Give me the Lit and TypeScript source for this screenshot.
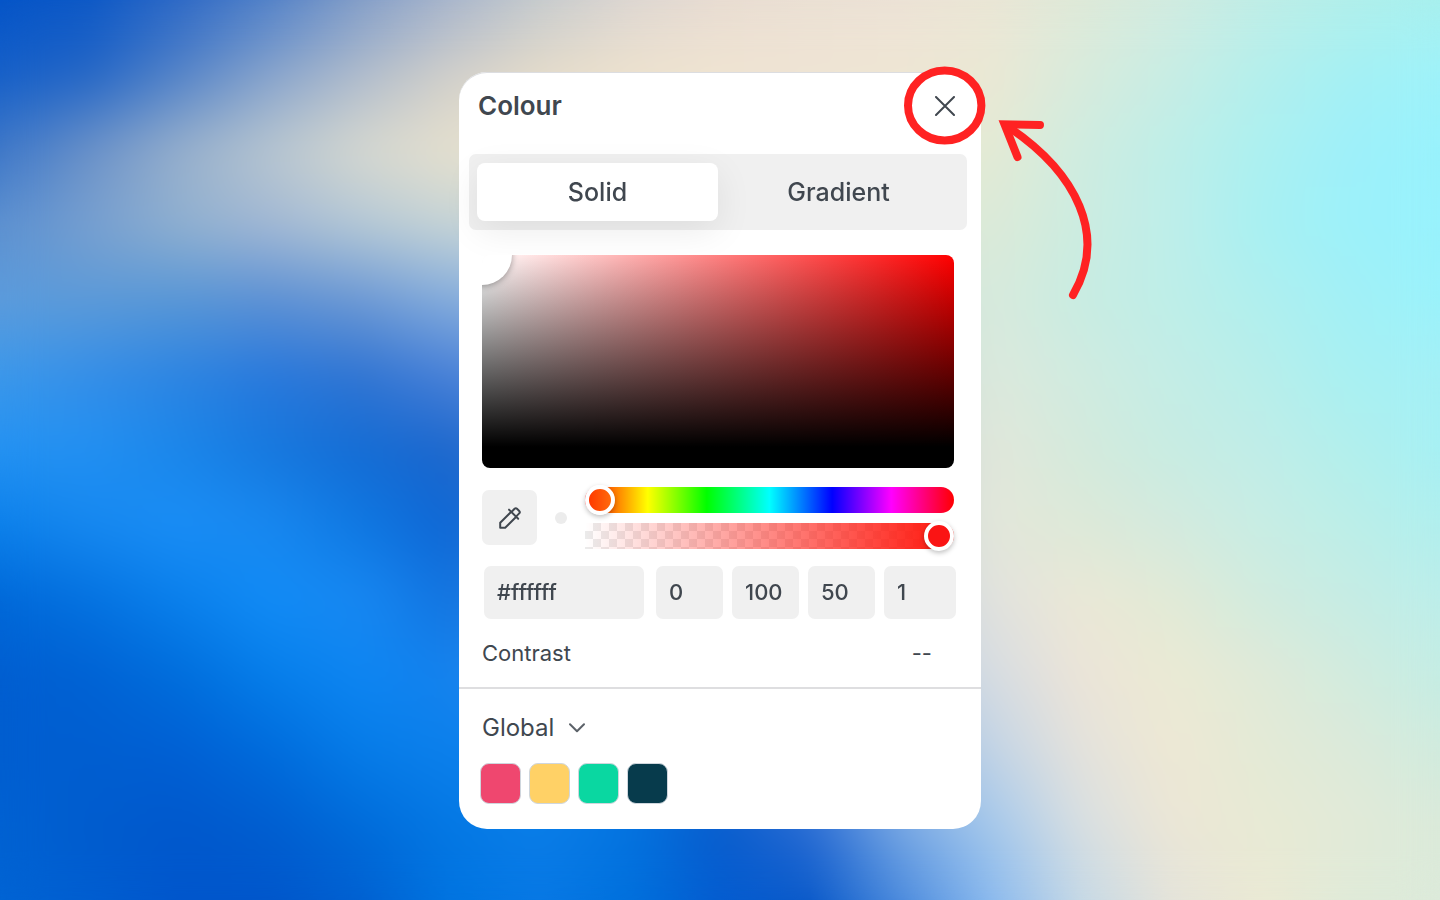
import { LitElement, html, css, svg } from "lit";
import { customElement, state } from "lit/decorators.js";

type Sample = [number, string];

// Colour samples for the wallpaper: one string per row, columns listed in X.
const X_LEFT = [0, 6.25, 12.5, 18.75, 25, 31.25];
const X_MID = [37.5, 43.75, 50, 56.25, 62.5];
const X_RIGHT = [68.75, 75, 81.25, 87.5, 93.75, 100];

const ROWS: { l: string; m?: string; r: string }[] = [
  { l: "0454c8 0c58c6 2c68c6 5080c8 809cc8 a6b4cc", m: "c4cace dcd6d2 e8dcd2 eae0d4 ece2d6", r: "eae6d6 dfe9d8 d2ebe0 c0ede6 b2efea a8f0ee" },
  { l: "1660c8 2466c6 5584c8 88a4cc b0bccc d2d0ca", m: "e6dcca eee2ce f0e4d2 f0e4d4 efe6d4", r: "ebe8d4 d8ebdc c8ede4 b4efec a4f0f4 9ef2fa" },
  { l: "3c76c8 6c92c8 98b0cc b8c6d0 d6d8d0 e6e0ce", r: "e4ead4 cfece0 beeee8 acf0f0 9ef0fa 98f2fc" },
  { l: "5c90d0 78a0d0 90b0d0 a2b8d4 b4c8d6 c6d4d6", r: "dcead8 ccece0 beeeea a8f0f2 9cf1fa 98f2fd" },
  { l: "5c9cdc 5c9ad8 5896d6 5c90d4 6c98d4 84acdc", r: "d8eadc c8ece2 beeee8 b0efee a2f0f6 9af2fb" },
  { l: "3c98ea 348ee8 2c84e2 2878dc 3074d2 4880d8", r: "dce9dc d0ebe0 c4ede6 b8eeea a8f0f2 a4f0f6" },
  { l: "2492f2 2290f2 1a86ea 1678de 146cd4 1c66cc", r: "e2e7da d4eadc c8ece2 c0ede8 b2efec a6f0f4" },
  { l: "0c80ea 1688f0 1a8ef6 1888f0 0f78e2 0e66d4", r: "e4e7da dde9d8 d4eade c8ede4 bceee8 b0efee" },
  { l: "0068d8 0472e0 0a80ec 128cf6 1888f2 1274e0", r: "e2e2de ebe8d6 e2ead6 d2ebde c6ece4 bceeea" },
  { l: "005ed0 0062d4 006edc 067eea 0e86f2 1482ee", r: "d6dce2 ece4d8 ebead4 e0ead8 d2ebde c4ede4" },
  { l: "005ed0 005ed0 0060d4 006cdc 067ce8 0c80ec", m: "0c80ec 0874e4 1468d4 4c88dc 90b4e4", r: "c2d4e6 e4e2dc eee8d4 e4ead6 dceada d0ebde" },
  { l: "0062d2 005cce 0058cc 005ed0 006cda 0478e4", m: "0a7ee8 0474e0 085ccc 2a6cd4 78a8e4", r: "a4c8ec d8dfe2 ece6d6 e8ead4 e2ead8 daeada" },
  { l: "0064d4 005ed0 0056cc 0056ca 0060d0 0074e0", m: "0878e4 0070dc 045cd0 0858c8 4888dc", r: "88b8ee c4d8e6 e4e3da ebe9d4 dfead8 dceada" },
];

function rowGradient(row: { l: string; m?: string; r: string }): string {
  const zip = (xs: number[], s?: string): Sample[] =>
    s ? s.split(" ").map((c, i) => [xs[i], c] as Sample) : [];
  const stops = [...zip(X_LEFT, row.l), ...zip(X_MID, row.m), ...zip(X_RIGHT, row.r)];
  return `linear-gradient(90deg, ${stops.map(([x, c]) => `#${c} ${x}%`).join(", ")})`;
}

@customElement("mesh-wallpaper")
export class MeshWallpaper extends LitElement {
  static styles = css`
    :host {
      position: absolute;
      inset: 0;
      display: flex;
      flex-direction: column;
      overflow: hidden;
    }
    .band {
      flex: 1;
      position: relative;
      background: var(--from);
    }
    .band::after {
      content: "";
      position: absolute;
      inset: 0;
      background: var(--to);
      -webkit-mask-image: linear-gradient(transparent, #000);
      mask-image: linear-gradient(transparent, #000);
    }
    .soften {
      position: absolute;
      inset: 0;
      backdrop-filter: blur(20px);
    }
  `;

  render() {
    const g = ROWS.map(rowGradient);
    return html`
      ${g.slice(0, -1).map((from, i) => html`<div class="band" style="--from:${from};--to:${g[i + 1]}"></div>`)}
      <div class="soften"></div>
    `;
  }
}

const closeIcon = svg`<svg class="close-icon" viewBox="0 0 20 20" aria-hidden="true"><path d="M1 1 19 19M19 1 1 19" /></svg>`;

const pipetteIcon = svg`<svg class="pipette-icon" viewBox="0 0 22 22" aria-hidden="true">
  <path d="M12 5 1.2 15.8V20.8H6.2L17 10" />
  <path d="M10 2.6 19.2 11.8" />
  <path d="M12.4 5 15.6 1.8Q16.8.6 18 1.8L20.2 4Q21.4 5.2 20.2 6.4L17 9.6" />
</svg>`;

const chevronIcon = svg`<svg class="chevron" viewBox="0 0 16 10" aria-hidden="true"><path d="M1 1.2 8 8.2 15 1.2" /></svg>`;

@customElement("app-root")
export class AppRoot extends LitElement {
  static styles = css`
    :host {
      --ink: #40474f;
      --fill: #f0f0f0;
      position: relative;
      display: flex;
      align-items: center;
      justify-content: center;
      min-height: 100vh;
      font-family: Inter, "Liberation Sans", sans-serif;
      color: var(--ink);
      overflow: hidden;
    }
    * {
      box-sizing: border-box;
    }
    button,
    input,
    select {
      font: inherit;
      color: inherit;
      border: 0;
      margin: 0;
      padding: 0;
      background: none;
    }
    svg {
      display: block;
      fill: none;
      stroke: currentColor;
      stroke-linecap: round;
      stroke-linejoin: round;
    }
    .panel {
      position: relative;
      width: 522px;
      border-radius: 28px;
      background: #fff;
      box-shadow: inset 0 1px #dcdde0;
    }
    .head {
      display: flex;
      align-items: center;
      justify-content: space-between;
      height: 68px;
      padding: 0 17px 0 19px;
    }
    h1 {
      margin: 0;
      font-size: 26px;
      font-weight: 600;
      line-height: 32px;
    }
    .close {
      display: grid;
      place-items: center;
      width: 39px;
      height: 39px;
    }
    .close-icon {
      width: 20px;
      height: 20px;
      stroke-width: 2;
    }
    .tabs {
      display: grid;
      grid-template-columns: 1fr 1fr;
      margin: 14px 14px 0 10px;
      padding: 9px 8px;
      border-radius: 7px;
      background: var(--fill);
    }
    .tab {
      height: 58px;
      border-radius: 8px;
      font-size: 25px;
      font-weight: 500;
    }
    .tab.active {
      background: #fff;
      box-shadow: 0 10px 36px rgba(0, 0, 0, 0.08);
    }
    .spectrum {
      position: relative;
      height: 213px;
      margin: 25px 27px 0 23px;
      border-radius: 8px;
      overflow: hidden;
      background: linear-gradient(to top, #000 10%, transparent),
        linear-gradient(to right, #fff, #f00);
    }
    .picker {
      position: absolute;
      left: -30px;
      top: -30px;
      width: 60px;
      height: 60px;
      border-radius: 50%;
      background: #fff;
      box-shadow: 0 1px 6px rgba(0, 0, 0, 0.35);
    }
    .mixer {
      display: flex;
      align-items: center;
      gap: 18px;
      margin: 19px 27px 0 23px;
    }
    .dropper {
      display: grid;
      place-items: center;
      width: 55px;
      height: 55px;
      border-radius: 7px;
      background: var(--fill);
    }
    .pipette-icon {
      width: 22px;
      height: 22px;
      stroke-width: 2;
    }
    .dot {
      width: 12px;
      height: 12px;
      border-radius: 50%;
      background: #ececec;
    }
    .sliders {
      flex: 1;
      display: flex;
      flex-direction: column;
      gap: 10px;
    }
    .slider {
      -webkit-appearance: none;
      appearance: none;
      display: block;
      width: 100%;
      height: 26px;
      border-radius: 13px;
    }
    .hue {
      background: linear-gradient(to right, #f00, #ff0 17%, #0f0 33%, #0ff 50%, #00f 67%, #f0f 83%, #f00);
      --thumb: linear-gradient(to right, #ff3a00, #ff6a0c);
    }
    .alpha {
      border-radius: 0 13px 13px 0;
      background: linear-gradient(to right, rgba(255, 20, 10, 0), rgb(255, 20, 10)),
        repeating-conic-gradient(#ebebeb 0 25%, #fff 0 50%) 0 0 / 16px 16px;
      --thumb: #fa1414;
    }
    .slider::-webkit-slider-runnable-track {
      height: 26px;
    }
    .slider::-webkit-slider-thumb {
      -webkit-appearance: none;
      width: 30px;
      height: 30px;
      margin-top: -2px;
      border: 4px solid #fff;
      border-radius: 50%;
      background: var(--thumb) padding-box;
      box-shadow: 0 2px 5px rgba(0, 0, 0, 0.25);
    }
    .fields {
      display: flex;
      gap: 9px;
      margin: 17px 25px 0 25px;
    }
    .field {
      flex: 0 0 67px;
      min-width: 0;
      height: 53px;
      padding: 0 13px;
      border-radius: 7px;
      background: var(--fill);
      font-size: 22px;
      font-weight: 500;
    }
    .field.hex {
      flex-basis: 160px;
      margin-right: 3px;
    }
    .field:last-child {
      flex: 1;
    }
    .contrast {
      display: flex;
      justify-content: space-between;
      padding: 18px 49px 18px 23px;
      border-bottom: 2px solid #dedee0;
      font-size: 22px;
      line-height: 32px;
    }
    .library {
      padding: 23px 23px 25px;
    }
    .scope {
      display: flex;
      align-items: center;
      gap: 15px;
    }
    .scope select {
      appearance: none;
      field-sizing: content;
      height: 32px;
      font-size: 24px;
      line-height: 32px;
    }
    .chevron {
      width: 16px;
      height: 10px;
      color: #5c6269;
      stroke-width: 2;
    }
    .swatches {
      display: flex;
      gap: 8px;
      margin-top: 19px;
      margin-left: -2px;
    }
    .swatch {
      width: 41px;
      height: 41px;
      border: 1px solid #cfd6dd;
      border-radius: 9px;
      background: var(--swatch);
    }
    .callout {
      position: absolute;
      left: 441px;
      top: -12px;
      width: 200px;
      height: 250px;
      color: #ff2222;
      stroke-width: 8;
      pointer-events: none;
    }
    .head-stroke {
      stroke-linejoin: miter;
    }
  `;

  @state() private mode = "Solid";

  private swatches = ["#ef476f", "#ffd166", "#0ad7a1", "#073b4c"];
  private channels = [
    ["Hue", "0"],
    ["Saturation", "100"],
    ["Lightness", "50"],
    ["Opacity", "1"],
  ];

  render() {
    return html`
      <mesh-wallpaper></mesh-wallpaper>
      <main class="panel">
        <header class="head">
          <h1>Colour</h1>
          <button class="close" aria-label="Close">${closeIcon}</button>
        </header>
        <div class="tabs" role="tablist">
          ${["Solid", "Gradient"].map(
            (name) => html`<button
              class="tab ${this.mode === name ? "active" : ""}"
              role="tab"
              aria-selected=${this.mode === name}
              @click=${() => (this.mode = name)}
            >${name}</button>`
          )}
        </div>
        <div class="spectrum"><div class="picker"></div></div>
        <div class="mixer">
          <button class="dropper" aria-label="Pick a colour">${pipetteIcon}</button>
          <span class="dot"></span>
          <div class="sliders">
            <input class="slider hue" type="range" min="0" max="360" value="0" aria-label="Hue slider" />
            <input class="slider alpha" type="range" min="0" max="100" value="100" aria-label="Opacity slider" />
          </div>
        </div>
        <div class="fields">
          <input class="field hex" type="text" value="#ffffff" aria-label="Hex" />
          ${this.channels.map(([label, value]) => html`<input class="field" type="text" .value=${value} aria-label=${label} />`)}
        </div>
        <div class="contrast"><span>Contrast</span><span>--</span></div>
        <section class="library">
          <div class="scope">
            <select aria-label="Palette"><option>Global</option></select>
            ${chevronIcon}
          </div>
          <div class="swatches">
            ${this.swatches.map((c) => html`<button class="swatch" style="--swatch:${c}" aria-label=${c}></button>`)}
          </div>
        </section>
        <svg class="callout" viewBox="900 60 200 250" aria-hidden="true">
          <ellipse cx="944.7" cy="105.5" rx="36.7" ry="35" />
          <path d="M1073 295C1108 235 1076 173 1010 128" />
          <path class="head-stroke" d="M1040 125 1004.5 124.3 1017.5 157" />
        </svg>
      </main>
    `;
  }
}
